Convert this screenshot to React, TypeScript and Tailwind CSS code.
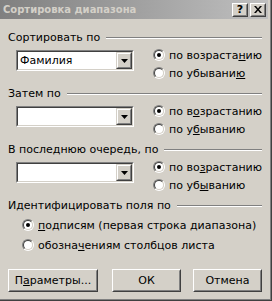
const face = { fontFamily: '"DejaVu Sans", "Liberation Sans", sans-serif' };

function Etched({ label }: { label: string }) {
  return (
    <div className="flex h-[13px] items-center gap-[6px] pr-[6px]">
      <span className="whitespace-nowrap leading-none">{label}</span>
      <div className="flex-1 border-t border-b border-t-[#808080] border-b-white" />
    </div>
  );
}

function Radio({ on, children }: { on?: boolean; children: React.ReactNode }) {
  return (
    <div className="flex h-[18px] items-center gap-[4px]">
      <span className="flex h-[12px] w-[12px] shrink-0 rounded-full border border-t-[#808080] border-l-[#808080] border-b-white border-r-white">
        <span className="flex flex-1 items-center justify-center rounded-full border border-t-[#404040] border-l-[#404040] border-b-[#d4d0c8] border-r-[#d4d0c8] bg-white">
          {on && <span className="h-[4px] w-[4px] rounded-full bg-black" />}
        </span>
      </span>
      <span className="whitespace-nowrap leading-none">{children}</span>
    </div>
  );
}

function Combo({ value }: { value?: string }) {
  return (
    <div className="mt-[4px] flex h-[21px] w-[118px] border border-t-[#808080] border-l-[#808080] border-b-white border-r-white">
      <div className="flex flex-1 items-center border border-t-[#404040] border-l-[#404040] border-b-[#d4d0c8] border-r-[#d4d0c8] bg-white">
        <span className="flex-1 pl-[2px] leading-none">{value}</span>
        <span className="flex h-[17px] w-[16px] border border-t-[#d4d0c8] border-l-[#d4d0c8] border-b-[#404040] border-r-[#404040]">
          <span className="flex flex-1 items-center justify-center border border-t-white border-l-white border-b-[#808080] border-r-[#808080] bg-[#d4d0c8]">
            <svg width="7" height="4" viewBox="0 0 7 4">
              <path d="M0 0h7L3.5 4z" fill="#000" />
            </svg>
          </span>
        </span>
      </div>
    </div>
  );
}

function Section({
  label,
  value,
  up,
  down,
}: {
  label: string;
  value?: string;
  up: React.ReactNode;
  down: React.ReactNode;
}) {
  return (
    <div className="mb-[5px]">
      <Etched label={label} />
      <div className="mt-[2px] flex h-[36px] items-start">
        <div className="ml-[8px] w-[137px]">
          <Combo value={value} />
        </div>
        <div className="flex flex-col">
          <Radio on>{up}</Radio>
          <Radio>{down}</Radio>
        </div>
      </div>
    </div>
  );
}

function Btn({ w, children }: { w: string; children: React.ReactNode }) {
  return (
    <div className={`flex h-[23px] ${w} border border-t-white border-l-white border-b-[#404040] border-r-[#404040]`}>
      <div className="flex flex-1 items-center justify-center border border-t-[#d4d0c8] border-l-[#d4d0c8] border-b-[#808080] border-r-[#808080]">
        {children}
      </div>
    </div>
  );
}

export default function App() {
  return (
    <div
      className="flex h-[301px] w-[272px] flex-col border-r border-b border-r-[#404040] border-b-[#404040] bg-[#d4d0c8] text-[11px] text-black"
      style={face}
    >
      <div className="flex flex-1 flex-col border-r border-b border-r-[#808080] border-b-[#808080] pr-[2px] pb-[2px]">
        <div className="flex h-[19px] items-center bg-gradient-to-r from-[#808080] to-[#c0c0c0] pl-[3px] pr-[2px]">
          <span className="flex-1 text-[10px] font-bold leading-none text-[#d4d0c8]">Сортировка диапазона</span>
          <div className="flex h-[14px] w-[16px] border border-t-white border-l-white border-b-[#404040] border-r-[#404040]">
            <span className="flex flex-1 items-center justify-center border border-t-[#d4d0c8] border-l-[#d4d0c8] border-b-[#808080] border-r-[#808080] bg-[#d4d0c8] text-[11px] font-bold leading-none">
              ?
            </span>
          </div>
          <div className="ml-[2px] flex h-[14px] w-[16px] border border-t-white border-l-white border-b-[#404040] border-r-[#404040]">
            <span className="flex flex-1 items-center justify-center border border-t-[#d4d0c8] border-l-[#d4d0c8] border-b-[#808080] border-r-[#808080] bg-[#d4d0c8]">
              <svg width="8" height="7" viewBox="0 0 8 7">
                <path d="M0 0h2l2 2.5L6 0h2L5 3.5 8 7H6L4 4.5 2 7H0l3-3.5z" fill="#000" />
              </svg>
            </span>
          </div>
        </div>

        <div className="flex flex-1 flex-col pl-[8px] pt-[12px]">
          <Section
            label="Сортировать по"
            value="Фамилия"
            up={<>по возраста<u>н</u>ию</>}
            down={<>по убывани<u>ю</u></>}
          />
          <Section
            label="Затем по"
            up={<>по в<u>о</u>зрастанию</>}
            down={<>по у<u>б</u>ыванию</>}
          />
          <Section
            label="В последнюю очередь, по"
            up={<>по во<u>з</u>растанию</>}
            down={<>по уб<u>ы</u>ванию</>}
          />
          <Etched label="Идентифицировать поля по" />
          <div className="mt-[3px] flex flex-col pl-[14px]">
            <div className="flex h-[20px] items-center">
              <Radio on>
                <u>п</u>одписям (первая строка диапазона)
              </Radio>
            </div>
            <div className="flex h-[20px] items-center">
              <Radio>
                обозна<u>ч</u>ениям столбцов листа
              </Radio>
            </div>
          </div>
          <div className="mt-[14px] flex pr-[6px]">
            <Btn w="w-[90px]">
              <span className="leading-none">
                П<u>а</u>раметры...
              </span>
            </Btn>
            <div className="ml-[14px]">
              <Btn w="w-[69px]">
                <span className="leading-none">ОК</span>
              </Btn>
            </div>
            <div className="ml-auto">
              <Btn w="w-[69px]">
                <span className="leading-none">Отмена</span>
              </Btn>
            </div>
          </div>
        </div>
      </div>
    </div>
  );
}
